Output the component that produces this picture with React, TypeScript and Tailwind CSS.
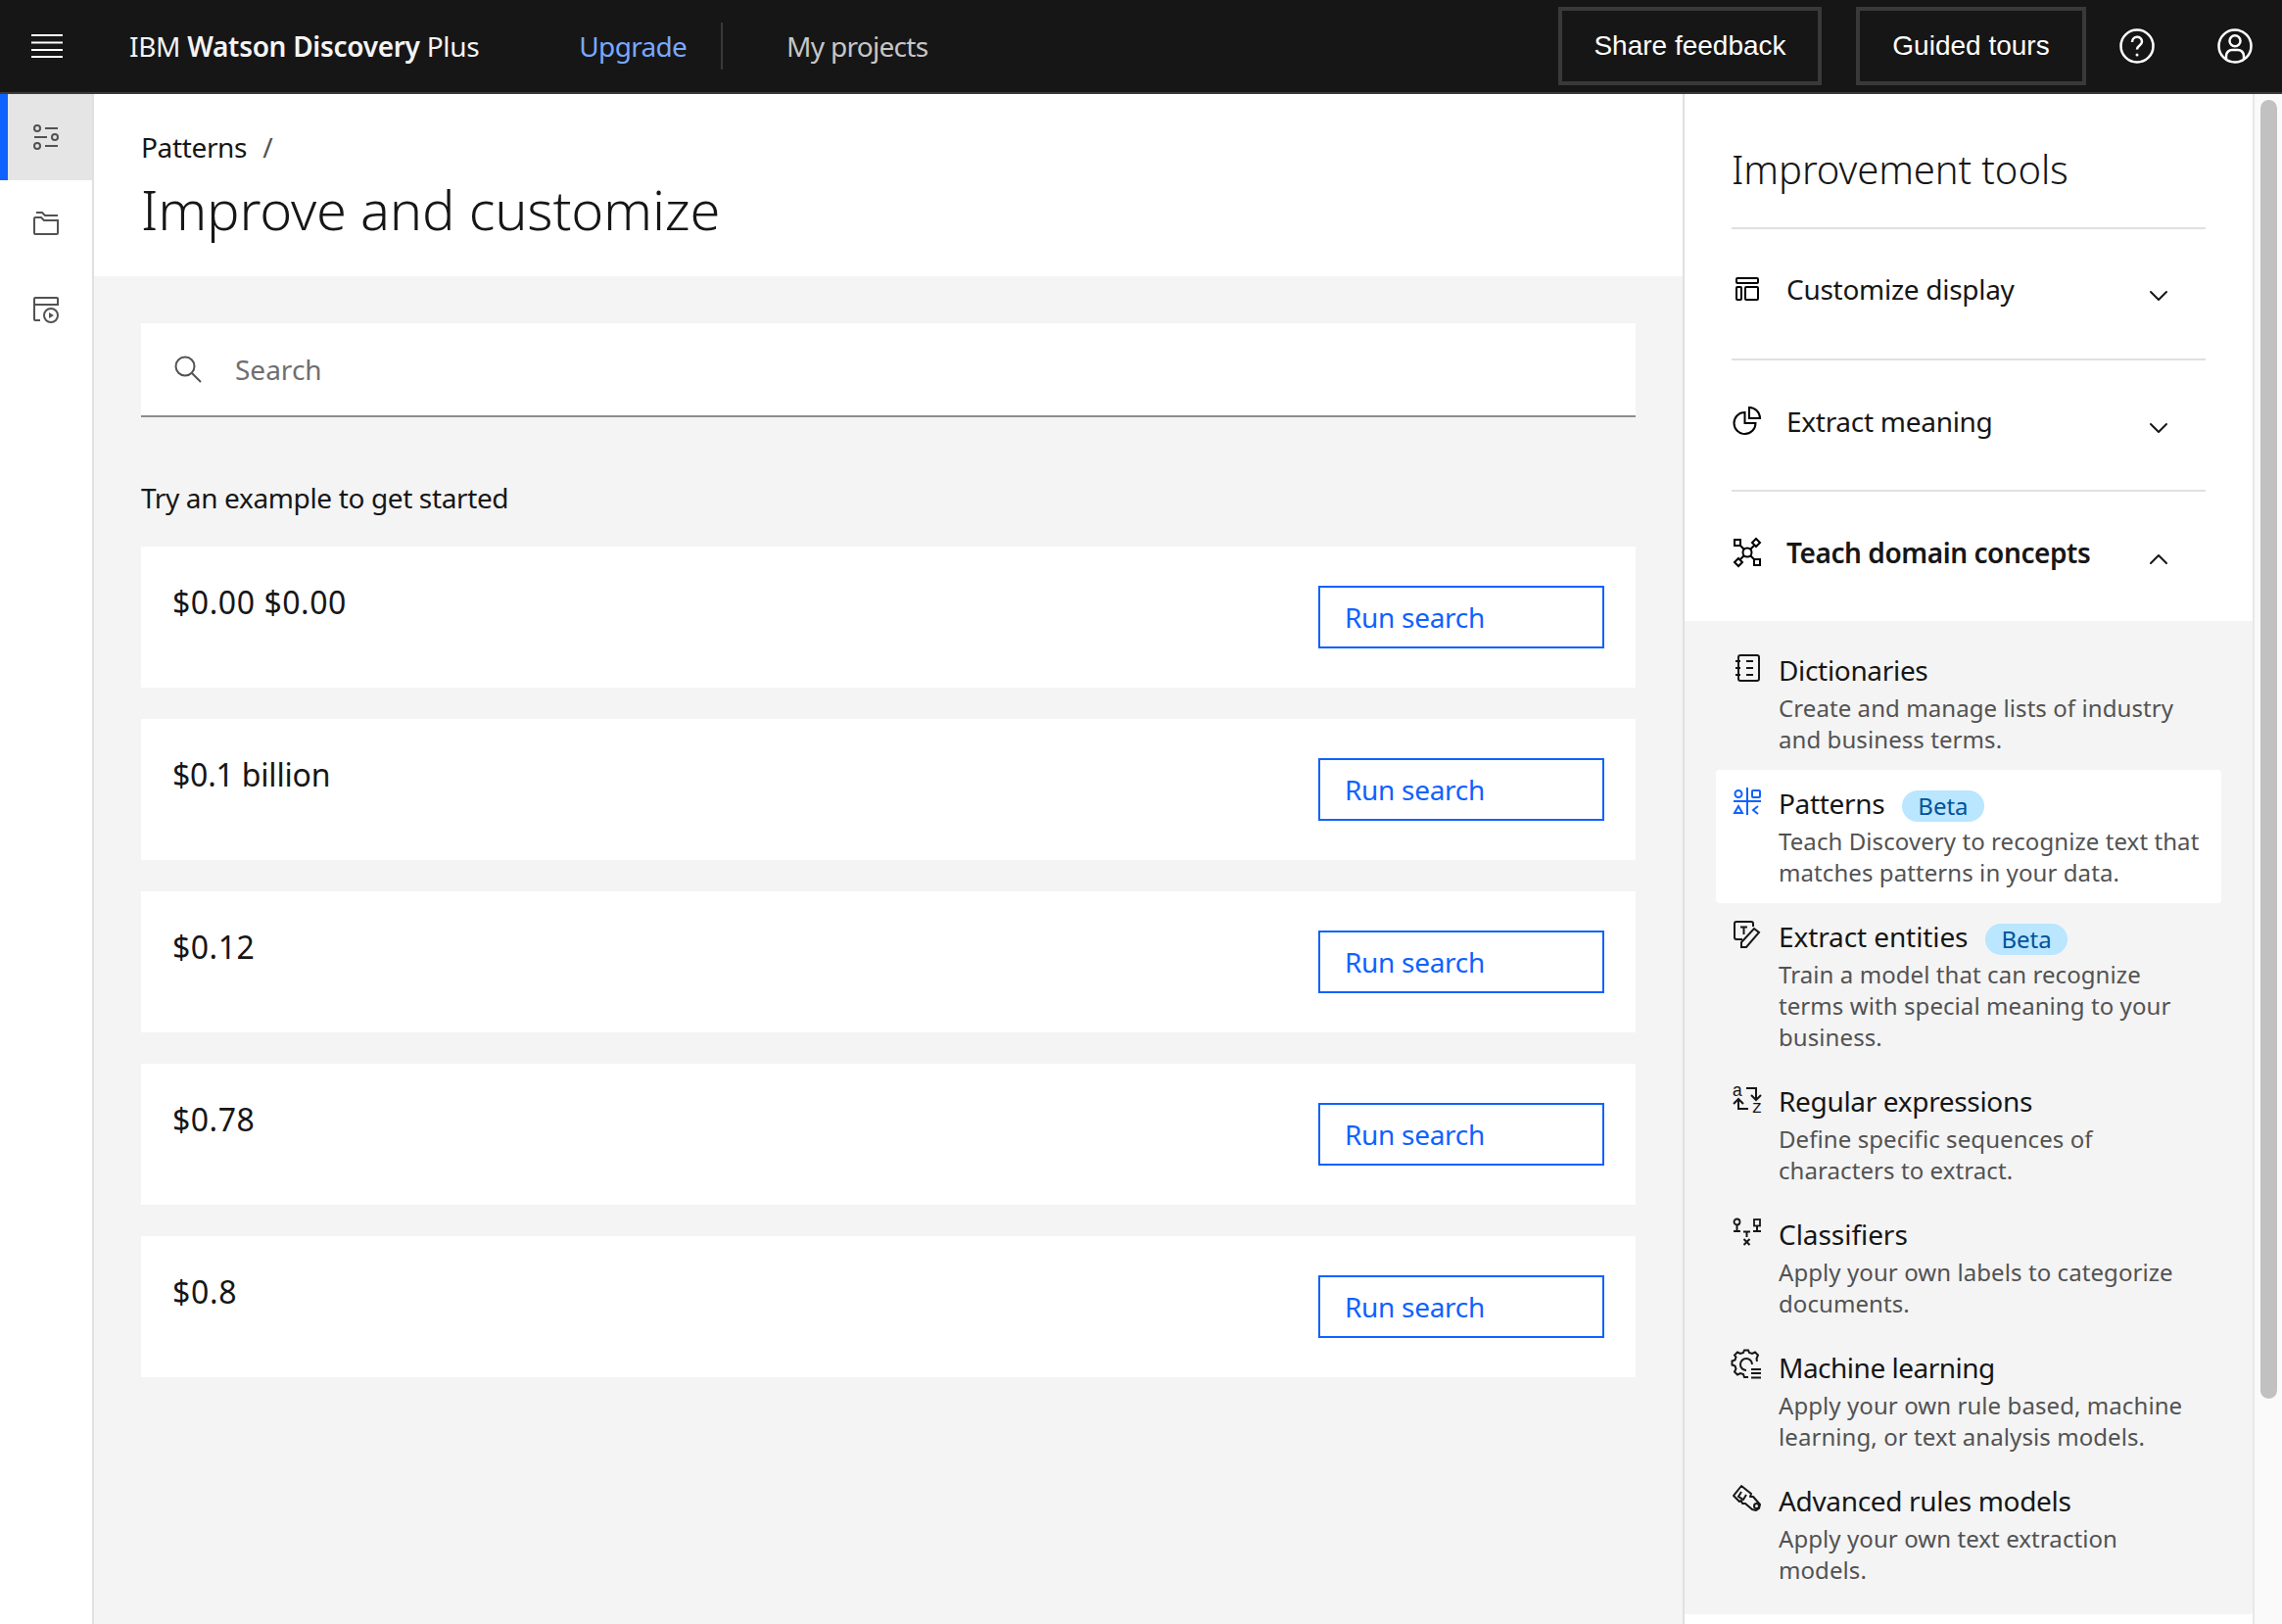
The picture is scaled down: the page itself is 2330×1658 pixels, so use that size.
import type { ReactNode } from "react"
import { ChevronDown, ChevronUp } from "lucide-react"

const examples = [
  { text: "$0.00 $0.00", spacing: "tracking-[0.55px]" },
  { text: "$0.1 billion", spacing: "tracking-[-0.2px]" },
  { text: "$0.12", spacing: "tracking-[0.5px]" },
  { text: "$0.78", spacing: "tracking-[0.5px]" },
  { text: "$0.8", spacing: "tracking-[0.7px]" },
]

function Glyph({ children, className = "" }: { children: ReactNode; className?: string }) {
  return (
    <svg
      viewBox="0 0 32 32"
      fill="none"
      stroke="currentColor"
      strokeWidth={2}
      className={`h-8 w-8 shrink-0 overflow-visible ${className}`}
    >
      {children}
    </svg>
  )
}

const SlidersIcon = () => (
  <Glyph>
    <circle cx="7" cy="7" r="3" />
    <path d="M15 7h13M4 16h13M15 25h13" />
    <circle cx="25" cy="16" r="3" />
    <circle cx="7" cy="25" r="3" />
  </Glyph>
)
const FolderIcon = () => (
  <Glyph>
    <path d="M6 5h6l3 3h13" />
    <path d="M5 10h6l3 3h14v13a1 1 0 0 1-1 1H5a1 1 0 0 1-1-1V11a1 1 0 0 1 1-1z" />
  </Glyph>
)
const PlayPageIcon = () => (
  <Glyph>
    <path d="M10 27H5a1 1 0 0 1-1-1V5a1 1 0 0 1 1-1h22a1 1 0 0 1 1 1v7M4 11h24" />
    <circle cx="21" cy="22" r="7" />
    <path d="M19 19l5 3-5 3z" fill="currentColor" stroke="none" />
  </Glyph>
)
const LayoutIcon = () => (
  <Glyph>
    <rect x="5" y="5" width="22" height="5" rx="1" />
    <rect x="5" y="14" width="5" height="13" rx="1" />
    <rect x="14" y="14" width="13" height="13" rx="1" />
  </Glyph>
)
const PieIcon = () => (
  <Glyph>
    <path d="M13.500 7a11 11 0 1 0 11 11h-11z" />
    <path d="M18 2a11 11 0 0 1 11 11H18z" />
  </Glyph>
)
const ConceptIcon = () => (
  <Glyph>
    <circle cx="16" cy="16" r="4.500" />
    <path d="M9 9l4 4M23 9l-4 4M9 23l4-4M23 23l-4-4" />
    <rect x="3" y="3" width="6" height="6" />
    <rect x="23" y="23" width="6" height="6" />
    <path d="M25 2l4 4-4 4-4-4zM7 22l4 4-4 4-4-4z" />
  </Glyph>
)
const NotebookIcon = () => (
  <Glyph>
    <rect x="7" y="3" width="21" height="26" rx="2" />
    <path d="M4 9h5M4 16h5M4 23h5M15 9h7M15 16h7M15 23h7" />
  </Glyph>
)
const PatternIcon = () => (
  <Glyph>
    <circle cx="7" cy="8.500" r="3.500" />
    <rect x="21" y="5" width="8" height="7" rx="1" />
    <path d="M2 16h28M16 2v28M3 28l4-7 4 7zM27 21l-5 4 5 4" />
  </Glyph>
)
const EntityIcon = () => (
  <Glyph>
    <path d="M11 21H5a2 2 0 0 1-2-2V5a2 2 0 0 1 2-2h15a2 2 0 0 1 2 2v3" />
    <path d="M9 8.500h7M12.500 8.500V16" />
    <path d="M10 29v-5l13-14 5 4-13 15z" />
  </Glyph>
)
const RegexIcon = () => (
  <Glyph>
    <text x="0.500" y="13" fontSize="18" fontFamily="Liberation Mono, monospace" fill="currentColor" stroke="none">
      a
    </text>
    <text x="20.500" y="30" fontSize="18" fontFamily="Liberation Mono, monospace" fill="currentColor" stroke="none">
      z
    </text>
    <path d="M15 5h10v12M20 12l5 5 5-5M7 16v10h10M2 21l5-5 5 5" />
  </Glyph>
)
const ClassifierIcon = () => (
  <Glyph>
    <circle cx="5.500" cy="5.500" r="3" strokeWidth={1.800} />
    <path d="M5.500 8.500V15M2 15h7" />
    <rect x="23" y="3" width="6" height="6.500" strokeWidth={1.800} />
    <path d="M26 9.500V15M22 15h8M12 15.500h7M15.500 15.500V21M12.500 23l6 6M18.500 23l-6 6" />
  </Glyph>
)
const GearListIcon = () => (
  <Glyph>
    <path d="M17 28h-4l-1-3-3-1-3 1.500-3-3 1.500-3-1-3-3-1v-4l3-1 1-3L3 5.500l3-3L9 4l3-1 1-2.500h4L18 3l3 1 3-1.500 3 3L25.500 9l.5 3" />
    <path d="M15 21a6 6 0 1 1 6-6" />
    <path d="M20 20h10M20 24h10M20 28.500h10" />
  </Glyph>
)
const RuleIcon = () => (
  <Glyph>
    <path d="M2 13l8-10 10 8-1 3 3 0 7 8-1 4-3 2-4-1-7-6-3 0-1-3-2 1z" strokeLinejoin="round" />
    <path d="M10 9l-3 5 5 3 3-5" />
    <circle cx="25.500" cy="23.500" r="2.500" />
  </Glyph>
)

type Tool = {
  name: string
  desc: string[]
  icon: ReactNode
  spacing: string
  beta?: boolean
  active?: boolean
}

const tools: Tool[] = [
  {
    name: "Dictionaries",
    desc: ["Create and manage lists of industry", "and business terms."],
    icon: <NotebookIcon />,
    spacing: "tracking-[-0.33px]",
  },
  {
    name: "Patterns",
    desc: ["Teach Discovery to recognize text that", "matches patterns in your data."],
    icon: <PatternIcon />,
    spacing: "tracking-[-0.33px]",
    beta: true,
    active: true,
  },
  {
    name: "Extract entities",
    desc: ["Train a model that can recognize", "terms with special meaning to your", "business."],
    icon: <EntityIcon />,
    spacing: "tracking-[-0.1px]",
    beta: true,
  },
  {
    name: "Regular expressions",
    desc: ["Define specific sequences of", "characters to extract."],
    icon: <RegexIcon />,
    spacing: "tracking-[-0.33px]",
  },
  {
    name: "Classifiers",
    desc: ["Apply your own labels to categorize", "documents."],
    icon: <ClassifierIcon />,
    spacing: "tracking-[-0.05px]",
  },
  {
    name: "Machine learning",
    desc: ["Apply your own rule based, machine", "learning, or text analysis models."],
    icon: <GearListIcon />,
    spacing: "tracking-[-0.5px]",
  },
  {
    name: "Advanced rules models",
    desc: ["Apply your own text extraction", "models."],
    icon: <RuleIcon />,
    spacing: "tracking-[-0.33px]",
  },
]

function Header() {
  return (
    <header className="flex h-24 shrink-0 items-center border-b-2 border-[#393939] bg-[#161616] text-[28px] leading-9">
      <svg viewBox="0 0 32 24" fill="none" stroke="white" strokeWidth={2} className="ml-8 h-6 w-8">
        <path d="M0 1h32M0 8.500h32M0 16h32M0 23h32" />
      </svg>
      <div className="ml-[68px] tracking-[-0.3px] text-[#f4f4f4]">
        IBM <span className="font-semibold">Watson Discovery</span> Plus
      </div>
      <div className="ml-[102px] tracking-[-0.7px] text-[#78a9ff]">Upgrade</div>
      <div className="ml-[35px] h-12 w-0.5 bg-[#393939]" />
      <div className="ml-[65px] tracking-[-0.7px] text-[#c6c6c6]">My projects</div>
      <button className="ml-auto h-20 w-[269px] border-4 border-[#393939] font-['Liberation_Sans',sans-serif] text-white">
        Share feedback
      </button>
      <button className="ml-[35px] h-20 w-[235px] border-4 border-[#393939] font-['Liberation_Sans',sans-serif] text-white">
        Guided tours
      </button>
      <svg viewBox="0 0 36 36" fill="none" stroke="white" strokeWidth={2.500} className="ml-[34px] h-9 w-9">
        <circle cx="18" cy="18" r="16.500" />
        <path d="M13 14c0-7 10-7 10-.5 0 4-5 4-5 8" />
        <circle cx="18" cy="27" r="1.500" fill="white" stroke="none" />
      </svg>
      <svg viewBox="0 0 36 36" fill="none" stroke="white" strokeWidth={2.500} className="ml-16 mr-[30px] h-9 w-9">
        <circle cx="18" cy="18" r="16.500" />
        <circle cx="18" cy="12.700" r="5.500" />
        <path d="M9 31v-3a6 6 0 0 1 6-6h6a6 6 0 0 1 6 6v3" />
      </svg>
    </header>
  )
}

function LeftNav() {
  return (
    <nav className="w-24 shrink-0 border-r-2 border-[#e0e0e0] bg-white text-[#525252]">
      <div className="flex h-[88px] items-center justify-center border-l-8 border-[#0f62fe] bg-[#e5e5e5] pr-2">
        <SlidersIcon />
      </div>
      <div className="flex h-[88px] items-center justify-center">
        <FolderIcon />
      </div>
      <div className="flex h-[88px] items-center justify-center">
        <PlayPageIcon />
      </div>
    </nav>
  )
}

function ExampleCard({ text, spacing }: { text: string; spacing: string }) {
  return (
    <div className="flex h-36 items-start justify-between bg-white pl-8 pr-8 pt-[33px]">
      <div className={`text-[32px] leading-12 text-[#161616] ${spacing}`}>{text}</div>
      <button className="mt-[7px] h-16 w-[292px] border-2 border-[#0f62fe] pl-[25px] text-left text-[28px] tracking-[-0.3px] text-[#0f62fe]">
        Run search
      </button>
    </div>
  )
}

function MainArea() {
  return (
    <main className="flex min-w-0 flex-1 flex-col bg-[#f4f4f4]">
      <div className="h-[186px] shrink-0 bg-white px-12 pt-9">
        <div className="flex h-9 items-center text-[28px] tracking-[-0.35px] text-[#161616]">
          Patterns
          <span className="ml-4 text-[#525252]">/</span>
        </div>
        <h1 className="mt-[13px] text-[56px] font-light leading-16 tracking-[-0.2px] text-[#161616]">
          Improve and customize
        </h1>
      </div>
      <div className="px-12 pt-12">
        <div className="flex h-24 items-center border-b-2 border-[#8d8d8d] bg-white pl-[34px]">
          <svg viewBox="0 0 28 28" fill="none" stroke="#525252" strokeWidth={2} className="h-7 w-7">
            <circle cx="11" cy="11" r="9.500" />
            <path d="M18 18l9 9" />
          </svg>
          <span className="ml-[34px] text-[28px] text-[#6f6f6f]">Search</span>
        </div>
        <div className="mt-16 text-[28px] leading-9 tracking-[-0.36px] text-[#161616]">
          Try an example to get started
        </div>
        <div className="mt-8 flex flex-col gap-8">
          {examples.map((e) => (
            <ExampleCard key={e.text} text={e.text} spacing={e.spacing} />
          ))}
        </div>
      </div>
    </main>
  )
}

function AccordionRow({
  icon,
  label,
  rowClass,
  bold,
  open,
}: {
  icon: ReactNode
  label: string
  rowClass: string
  bold?: boolean
  open?: boolean
}) {
  return (
    <div className={`mx-12 flex items-start ${rowClass} ${open ? "" : "border-b-2 border-[#e0e0e0]"}`}>
      {icon}
      <span
        className={`ml-6 text-[28px] leading-8 text-[#161616] ${bold ? "font-semibold tracking-[-0.43px]" : "tracking-[-0.28px]"}`}
      >
        {label}
      </span>
      <span className="ml-auto mr-8 mt-[7px] text-[#161616]">
        {open ? <ChevronUp className="h-8 w-8" strokeWidth={1.500} /> : <ChevronDown className="h-8 w-8" strokeWidth={1.500} />}
      </span>
    </div>
  )
}

function ToolItem({ tool }: { tool: Tool }) {
  return (
    <div className={`mx-8 flex gap-4 rounded px-4 pb-[15px] pt-4 ${tool.active ? "bg-white text-[#0f62fe]" : "text-[#161616]"}`}>
      {tool.icon}
      <div className="min-w-0 flex-1">
        <div className={`mb-[5px] flex h-9 items-center text-[28px] text-[#161616] ${tool.spacing}`}>
          {tool.name}
          {tool.beta && (
            <span className="ml-[18px] mt-[6px] flex h-8 items-center rounded-full bg-[#bae6ff] px-4 text-[24px] tracking-normal text-[#00539a]">
              Beta
            </span>
          )}
        </div>
        {tool.desc.map((line) => (
          <div key={line} className="text-[24px] leading-8 tracking-[0.08px] text-[#525252]">
            {line}
          </div>
        ))}
      </div>
    </div>
  )
}

function ToolsPanel() {
  return (
    <aside className="flex w-[612px] shrink-0 border-l-2 border-[#e0e0e0] bg-white">
      <div className="w-[580px] shrink-0">
        <div className="mx-12 h-[138px] border-b-2 border-[#e0e0e0] pt-[51px] text-[40px] font-light leading-[52px] tracking-[-0.09px] text-[#161616]">
          Improvement tools
        </div>
        <AccordionRow icon={<LayoutIcon />} label="Customize display" rowClass="h-[134px] pt-[45px]" />
        <AccordionRow icon={<PieIcon />} label="Extract meaning" rowClass="h-[134px] pt-[46px]" />
        <AccordionRow icon={<ConceptIcon />} label="Teach domain concepts" rowClass="h-[132px] pt-[46px]" bold open />
        <div className="bg-[#f4f4f4] pb-[14px] pt-4">
          {tools.map((t) => (
            <ToolItem key={t.name} tool={t} />
          ))}
        </div>
      </div>
      <div className="flex-1 border-l-2 border-[#e8e8e8] bg-[#fafafa] pl-[6px] pt-[6px]">
        <div className="h-[1326px] w-[17px] rounded-full bg-[#c1c1c1]" />
      </div>
    </aside>
  )
}

export default function App() {
  return (
    <div className="flex h-screen flex-col overflow-hidden bg-white font-['Noto_Sans',sans-serif]">
      <Header />
      <div className="flex min-h-0 flex-1">
        <LeftNav />
        <MainArea />
        <ToolsPanel />
      </div>
    </div>
  )
}
